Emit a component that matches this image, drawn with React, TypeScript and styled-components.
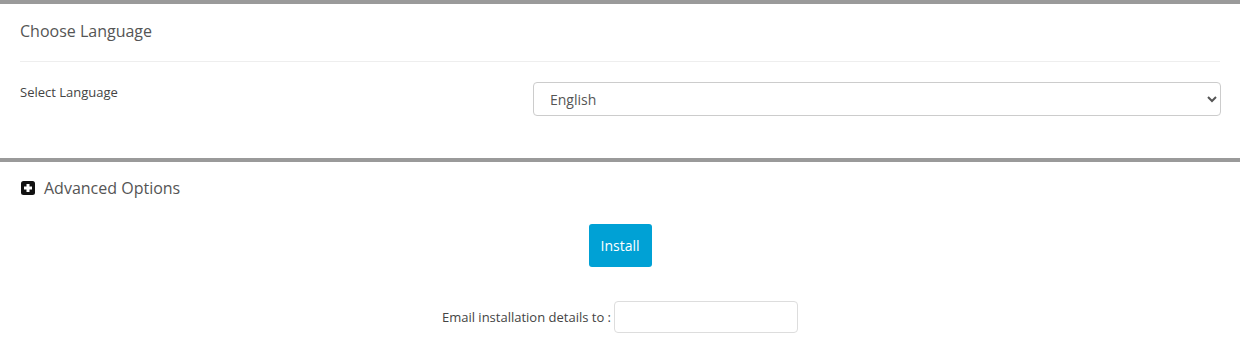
import React from "react";
import styled, { createGlobalStyle } from "styled-components";

const Global = createGlobalStyle`
  html, body { margin: 0; padding: 0; background: #fff; }
  body { font-family: "Open Sans", "Noto Sans", Arial, sans-serif; color: #555; }
  * { box-sizing: border-box; }
`;

const Section = styled.section`
  border-top: 4px solid #9a9a9a;
  padding: 0 20px;
`;

const Heading = styled.h3`
  margin: 0;
  padding: 16px 0 19px;
  font-size: 16px;
  line-height: 22px;
  font-weight: 400;
  color: #555;
  border-bottom: 1px solid #eee;
`;

const FieldRow = styled.div`
  display: grid;
  grid-template-columns: 513px 1fr;
  align-items: start;
  padding: 20px 0 42px;
  margin-right: -1px;
`;

const Label = styled.label`
  font-size: 13px;
  line-height: 18px;
  padding-top: 1px;
  color: #444;
`;

const Select = styled.select`
  height: 34px;
  width: 100%;
  border: 1px solid #ccc;
  border-radius: 4px;
  background: #fff;
  padding: 0 10px 0 12px;
  font-family: "Open Sans", sans-serif;
  font-size: 14px;
  color: #555;
  outline: none;
`;

const AdvancedRow = styled.div`
  display: flex;
  align-items: center;
  gap: 9px;
  padding: 14px 0 0 1px;
  font-size: 16px;
  line-height: 24px;
  color: #555;
`;

const Center = styled.div<{ $top: number }>`
  display: flex;
  justify-content: center;
  padding-top: ${(p) => p.$top}px;
`;

const Button = styled.button`
  height: 43px;
  width: 63px;
  border: none;
  border-radius: 3px;
  background: #00a1d5;
  color: #fff;
  font-family: "Open Sans", sans-serif;
  font-size: 14px;
  padding: 0;
`;

const EmailRow = styled.div`
  display: flex;
  align-items: center;
  gap: 3px;
  font-size: 13px;
  color: #444;
`;

const Input = styled.input`
  width: 184px;
  height: 32px;
  border: 1px solid #ddd;
  border-radius: 4px;
  outline: none;
`;

const PlusIcon = () => (
  <svg width="14" height="14" viewBox="0 0 14 14">
    <rect x="0" y="0" width="14" height="14" rx="2.5" fill="#111" />
    <rect x="5.5" y="3" width="3" height="8" fill="#fff" />
    <rect x="3" y="5.5" width="8" height="3" fill="#fff" />
  </svg>
);

export default function App() {
  return (
    <>
      <Global />
      <Section>
        <Heading>Choose Language</Heading>
        <FieldRow>
          <Label>Select Language</Label>
          <Select defaultValue="en">
            <option value="en">English</option>
          </Select>
        </FieldRow>
      </Section>
      <Section>
        <AdvancedRow>
          <PlusIcon />
          <span>Advanced Options</span>
        </AdvancedRow>
        <Center $top={24}>
          <Button>Install</Button>
        </Center>
        <Center $top={34}>
          <EmailRow>
            <span>Email installation details to :</span>
            <Input type="text" />
          </EmailRow>
        </Center>
      </Section>
    </>
  );
}
